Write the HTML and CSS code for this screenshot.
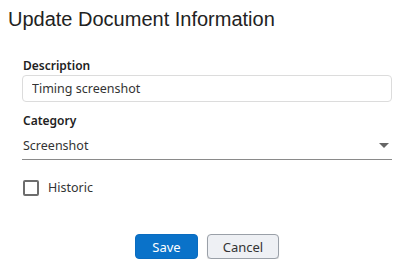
FILE: index.html
```html
<!DOCTYPE html>
<html lang="en">
<head>
  <meta charset="UTF-8">
  <title>Update Document Information</title>
  <link rel="stylesheet" href="styles.css">
</head>
<body>
  <div class="dialog">
    <div class="dialog-title">Update Document Information</div>
    <form class="doc-form">
      <div class="field">
        <label class="field-label" for="description">Description</label>
        <input id="description" class="text-input" type="text" value="Timing screenshot">
      </div>
      <div class="field">
        <label class="field-label" for="category">Category</label>
        <div class="select">
          <span class="select-value">Screenshot</span>
          <span class="select-arrow"></span>
        </div>
      </div>
      <label class="check">
        <span class="check-box"></span>
        <span class="check-text">Historic</span>
      </label>
      <div class="actions">
        <button type="button" class="btn btn-primary">Save</button>
        <button type="button" class="btn btn-secondary">Cancel</button>
      </div>
    </form>
  </div>
</body>
</html>
```

FILE: styles.css
```css
body {
  margin: 8px;
  background-color: #ffffff;
  color: #222222;
  font-family: 'Noto Sans', 'Open Sans', sans-serif;
}

.dialog-title {
  font-family: 'Liberation Sans', Arial, sans-serif;
  font-size: 20px;
  line-height: 22px;
  color: #222222;
}

.doc-form {
  width: 370px;
  margin: 28px 0 0 14px;
  display: flex;
  flex-direction: column;
}

.field {
  display: flex;
  flex-direction: column;
  margin-bottom: 11px;
}

.field-label {
  font-size: 12px;
  font-weight: 600;
  line-height: 16px;
  margin-bottom: 1px;
  padding-left: 1px;
}

.text-input {
  font-family: inherit;
  font-size: 12.5px;
  color: #333333;
  height: 27px;
  box-sizing: border-box;
  padding: 0 9px;
  border: 1px solid #dcdcdc;
  border-radius: 4px;
  outline: none;
}

.select {
  display: flex;
  align-items: center;
  justify-content: space-between;
  height: 27px;
  padding: 2px 3px 0 1px;
  border-bottom: 1px solid #8a8a8a;
  font-size: 12.5px;
  color: #333333;
}

.select-arrow {
  width: 0;
  height: 0;
  border-left: 5px solid transparent;
  border-right: 5px solid transparent;
  border-top: 5px solid #666666;
}

.check {
  display: flex;
  align-items: center;
  gap: 9px;
  margin-top: 8px;
  font-size: 12.5px;
  color: #333333;
  padding-left: 1px;
}

.check-box {
  width: 12px;
  height: 12px;
  border: 2px solid #6d6d6d;
  border-radius: 2px;
}

.actions {
  display: flex;
  justify-content: center;
  gap: 9px;
  margin-top: 38px;
}

.btn {
  font-family: inherit;
  font-size: 13px;
  height: 25px;
  border-radius: 4px;
  cursor: pointer;
}

.btn-primary {
  width: 63px;
  background-color: #0a72c9;
  border: 1px solid #0a6cc0;
  color: #ffffff;
}

.btn-secondary {
  width: 72px;
  background-color: #eef0f4;
  border: 1px solid #9aa0a8;
  color: #333333;
  box-shadow: 0 1px 1px rgba(0, 0, 0, 0.15);
}
```
